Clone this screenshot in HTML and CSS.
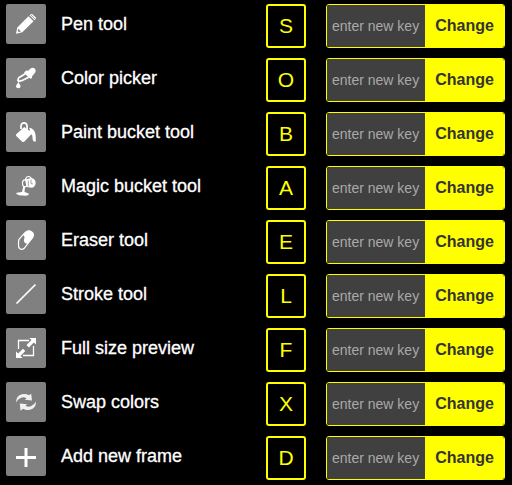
FILE: index.html
```
<!DOCTYPE html>
<html lang="en">
<head>
<meta charset="utf-8">
<title>Keyboard shortcuts</title>
<link rel="stylesheet" href="styles.css">
</head>
<body>
<main class="shortcuts">
  <div class="row">
    <span class="icon"><svg viewBox="0 0 40 40"><path d="M10 29.700l1.300-6.200L22.500 12.300l5 5L16.300 28.300z"/><path d="M23.500 11.300l1-1q1-.8 2 0l3 3q.8 1 0 2l-1 1z"/><path class="cut" d="M24.500 10.600l5 5"/><path class="hole" d="M12.300 24.800l2.600 2.600-2.200.5-.9-.9z"/></svg></span>
    <span class="label">Pen tool</span><kbd>S</kbd>
    <form class="edit"><input placeholder="enter new key"><button type="button">Change</button></form>
  </div>
  <div class="row">
    <span class="icon"><svg viewBox="0 0 40 40"><path d="M19 13.500l2-1.200 1 .8 2-2.200q2.200-1.700 4.500-.7 2 1.500.9 4L27 17.200l-1 1 .2 1.600-1.500 1-2-1.300-4-3.700-.5-1.300z"/><path class="line" d="M19.200 15.700l-6.500 4-.8 2.700.8 1 3-.7 7-3.500"/><path d="M12.300 23.500c.4 2 2.300 3.300 2.300 4.800a2.300 2 0 0 1-4.600 0c0-1.500 2-2.800 2.300-4.800z"/></svg></span>
    <span class="label">Color picker</span><kbd>O</kbd>
    <form class="edit"><input placeholder="enter new key"><button type="button">Change</button></form>
  </div>
  <div class="row">
    <span class="icon"><svg viewBox="0 0 40 40"><path d="M10 22.500l8.200-7.500 8.300 6-8.300 8.700q-1 .6-2 0L10.200 24z"/><path class="line" d="M15 17v-3.200q.4-2.800 3-2.900 2.700 0 3 3l.2 4"/><path d="M23.300 15.700q5.700 1 6.300 7.500l.3 6-1.600.5-1.500-1.500-.5-4.500-2-3z"/></svg></span>
    <span class="label">Paint bucket tool</span><kbd>B</kbd>
    <form class="edit"><input placeholder="enter new key"><button type="button">Change</button></form>
  </div>
  <div class="row">
    <span class="icon"><svg viewBox="0 0 40 40"><path d="M19 13.500l6-1.500q3.200.2 4.200 2.500.9 2.500 0 4.500-1 2.500-3.200 2.700l-5.500-.7z"/><ellipse class="thin" cx="19" cy="17.300" rx="2.500" ry="3.500"/><path class="thin" d="M19.500 14q.4-3.500 3-3.500t3 3.500v3.800"/><path d="M17.300 20.300h1.800l-.6 5.600 4.100 1.500v1.500q-2 1-5 .7-4.500.2-7.300-1.500l.4-1.300 5.300-.7z"/><path class="hair" d="M22.300 14.500v6M25 13.500v4.200h1.800"/></svg></span>
    <span class="label">Magic bucket tool</span><kbd>A</kbd>
    <form class="edit"><input placeholder="enter new key"><button type="button">Change</button></form>
  </div>
  <div class="row">
    <span class="icon"><svg viewBox="0 0 40 40"><path class="thin" d="M13 19.300l6.200-7q2-2 4.300-1.400l2.500 1.400q2 1.500 1 4.200-.5 1.500-1.700 2.700L18 28.500q-2.300 1.700-4.500 0-1.300-1.400-1-4.500 0-3.200.5-4.700z"/><path d="M17 14.800l3-3q3-1.900 5.800-.2 2.300 1.500 1.900 4.100-.2 1.500-2.200 3.700l-3.900 4.300q-2 .3-3.300-1.400-1.200-2 .2-4.300.3-2-1.500-3.200z"/></svg></span>
    <span class="label">Eraser tool</span><kbd>E</kbd>
    <form class="edit"><input placeholder="enter new key"><button type="button">Change</button></form>
  </div>
  <div class="row">
    <span class="icon"><svg viewBox="0 0 40 40"><path class="line" d="M10.500 29.500L29.500 10.500"/></svg></span>
    <span class="label">Stroke tool</span><kbd>L</kbd>
    <form class="edit"><input placeholder="enter new key"><button type="button">Change</button></form>
  </div>
  <div class="row">
    <span class="icon"><svg viewBox="0 0 40 40"><path class="frame" d="M12.500 21v-8.500H23M27.500 18v9.500H17"/><path d="M30 10v6.500l-2.200-2.100-5 5-2.300-2.300 5-5-2.200-2.100zM10 30v-6.500l2.200 2.100 4.800-4.800 2.300 2.300-4.800 4.800 2.200 2.100z"/></svg></span>
    <span class="label">Full size preview</span><kbd>F</kbd>
    <form class="edit"><input placeholder="enter new key"><button type="button">Change</button></form>
  </div>
  <div class="row">
    <span class="icon"><svg viewBox="0 0 40 40"><path class="pale" d="M10 20.500q0-7 6-8.300 4-.8 7 1l2.200-1.500.8 6.800-7.200-.7 1.800-1.600q-3-1.500-5.500-.5-3.200 1.300-5.100 4.800z"/><path class="pale" d="M30 19.500q0 7-6 8.300-4 .8-7-1l-2.500 1.900-.7-7.200 7.400.7-1.800 1.600q3 1.500 5.500.5 3.200-1.300 5.100-4.800z"/></svg></span>
    <span class="label">Swap colors</span><kbd>X</kbd>
    <form class="edit"><input placeholder="enter new key"><button type="button">Change</button></form>
  </div>
  <div class="row">
    <span class="icon"><svg viewBox="0 0 40 40"><path d="M18.500 12h3v8h8.500v3h-8.500v8h-3v-8H10v-3h8.500z"/></svg></span>
    <span class="label">Add new frame</span><kbd>D</kbd>
    <form class="edit"><input placeholder="enter new key"><button type="button">Change</button></form>
  </div>
</main>
</body>
</html>
```
FILE: styles.css
```
* { box-sizing: border-box; }
body {
  margin: 0;
  height: 485px;
  overflow: hidden;
  background: #000;
  font-family: "Liberation Sans", Arial, sans-serif;
}
.shortcuts {
  display: grid;
  gap: 10px;
  padding: 4px 7px 0 6px;
}
.row {
  display: grid;
  grid-template-columns: 55px 205px 60px 179px;
  height: 44px;
}
.icon {
  width: 40px;
  height: 40px;
  border-radius: 2px;
  background: #808080;
}
.icon svg { display: block; width: 40px; height: 40px; fill: #fff; }
.icon .cut { fill: none; stroke: #808080; stroke-width: .8; }
.icon .hole { fill: #808080; }
.icon .line { fill: none; stroke: #fff; stroke-width: 1.7; }
.icon .thin { fill: none; stroke: #fff; stroke-width: 1.2; }
.icon .hair { fill: none; stroke: #808080; stroke-width: .7; }
.icon .frame { fill: none; stroke: #fff; stroke-width: 1.3; }
.icon .pale { fill: #f0f0f0; }
.label {
  height: 40px;
  font-size: 18px;
  line-height: 40px;
  color: #fff;
  -webkit-text-stroke: .3px #fff;
}
kbd {
  width: 40px;
  height: 44px;
  border: 2px solid #ff0;
  border-radius: 3px;
  color: #ff0;
  font: 21px/40px "Liberation Sans", Arial, sans-serif;
  text-align: center;
}
.edit {
  display: flex;
  height: 44px;
  margin: 0;
  border: 1px solid #ff0;
  border-radius: 3px;
  overflow: hidden;
}
.edit input {
  width: 98px;
  padding: 0 0 1px 5px;
  border: 0;
  outline: 0;
  background: #404040;
  color: #fff;
  font: 14px "Liberation Sans", Arial, sans-serif;
}
.edit input::placeholder { color: #a9a9a9; opacity: 1; }
.edit button {
  flex: 1;
  padding: 0;
  border: 0;
  background: #ff0;
  color: #333;
  font: bold 16px "Liberation Sans", Arial, sans-serif;
}
```
